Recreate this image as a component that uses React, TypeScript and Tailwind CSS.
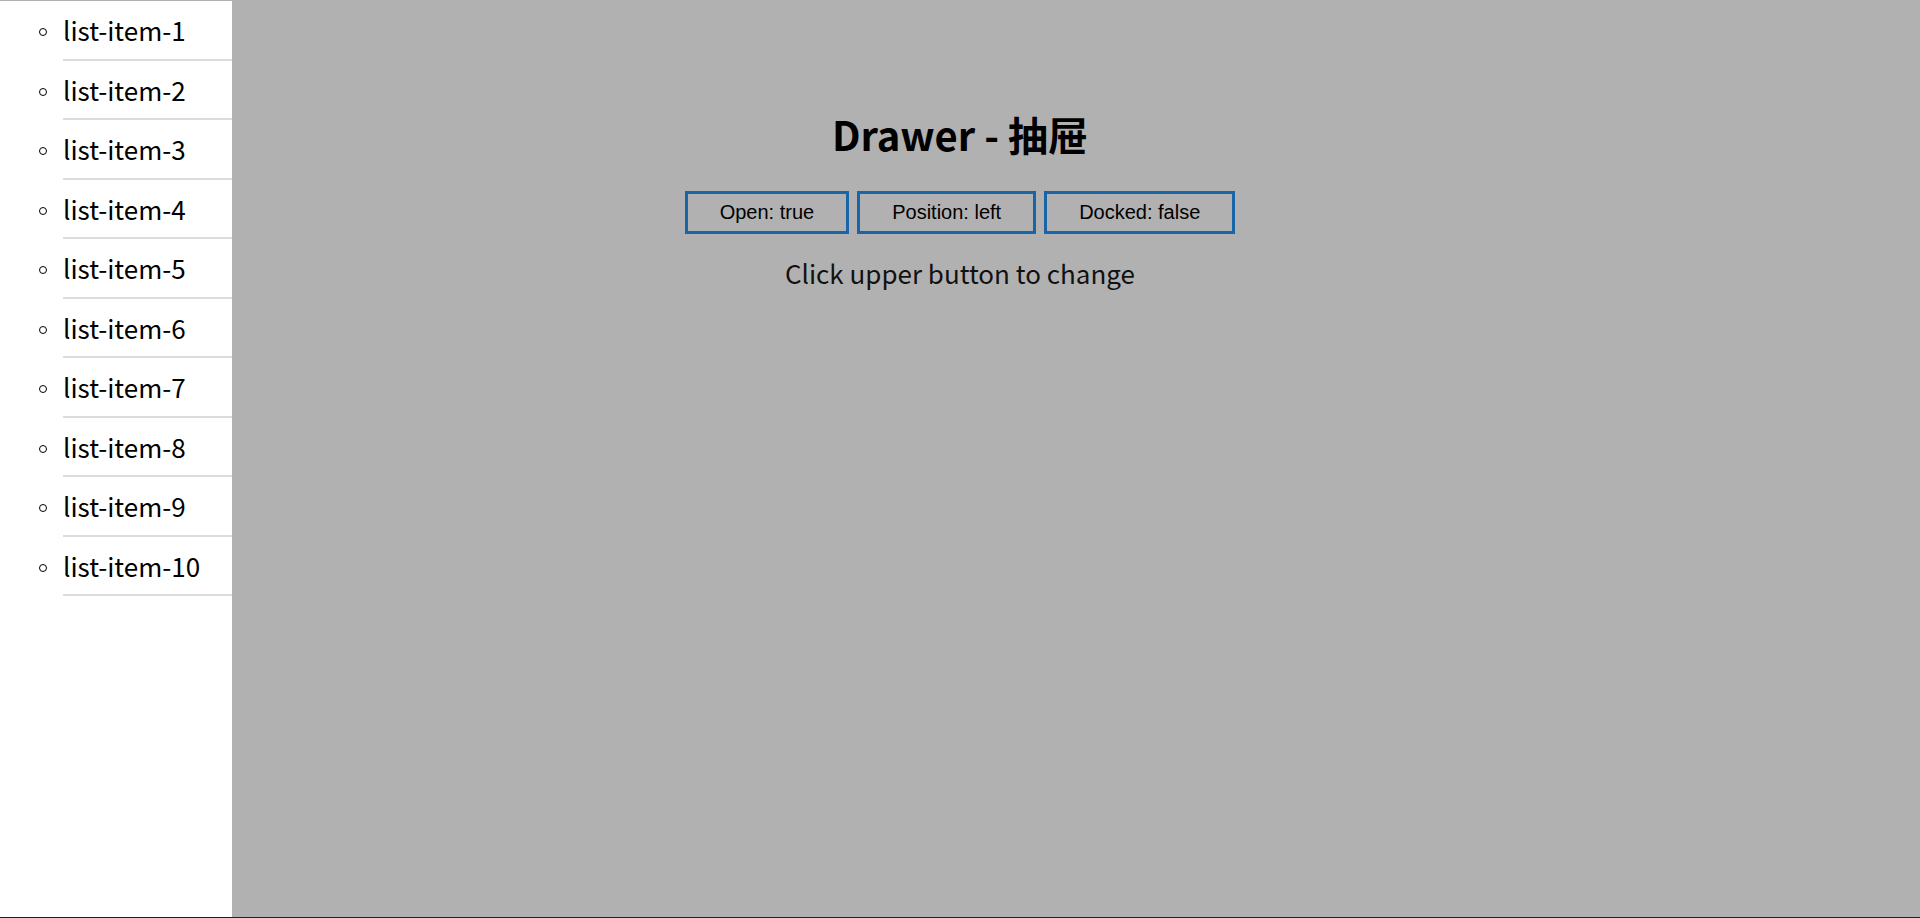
import React from "react";

const items = Array.from({ length: 10 }, (_, i) => `list-item-${i + 1}`);
const cjk = { fontFamily: '"Noto Sans CJK SC", "Noto Sans", sans-serif' };
const arial = { fontFamily: '"Liberation Sans", Arial, sans-serif' };

export default function App() {
  return (
    <div className="relative h-[918px] w-full overflow-hidden border-b border-[#1f1f1f] bg-[#b1b1b1] text-black" style={cjk}>
      <main className="flex flex-col items-center pt-[110px]">
        <h1 className="text-[40px] font-bold leading-[48px]">Drawer - 抽屉</h1>
        <div className="mt-[33px] flex gap-2" style={arial}>
          <button className="border-[3px] border-[#1a65a8] px-8 py-[7px] text-[20px] leading-[23px]">Open: true</button>
          <button className="border-[3px] border-[#1a65a8] px-8 py-[7px] text-[20px] leading-[23px]">Position: left</button>
          <button className="border-[3px] border-[#1a65a8] px-8 py-[7px] text-[20px] leading-[23px]">Docked: false</button>
        </div>
        <p className="mt-[21px] text-[26px] leading-[36px] text-[#111]">Click upper button to change</p>
      </main>
      <aside className="absolute left-0 top-[1px] bottom-0 w-[232px] bg-white">
        <ul>
          {items.map((t) => (
            <li key={t} className="flex h-[59.5px]">
              <div className="w-[63px] shrink-0">
                <span className="ml-[39px] mt-[27px] block h-[8px] w-[8px] rounded-full border border-black" />
              </div>
              <div className="flex-1 border-b-2 border-[#dcdcdc] pt-[11px] text-[26px] leading-[36px]">{t}</div>
            </li>
          ))}
        </ul>
      </aside>
    </div>
  );
}
